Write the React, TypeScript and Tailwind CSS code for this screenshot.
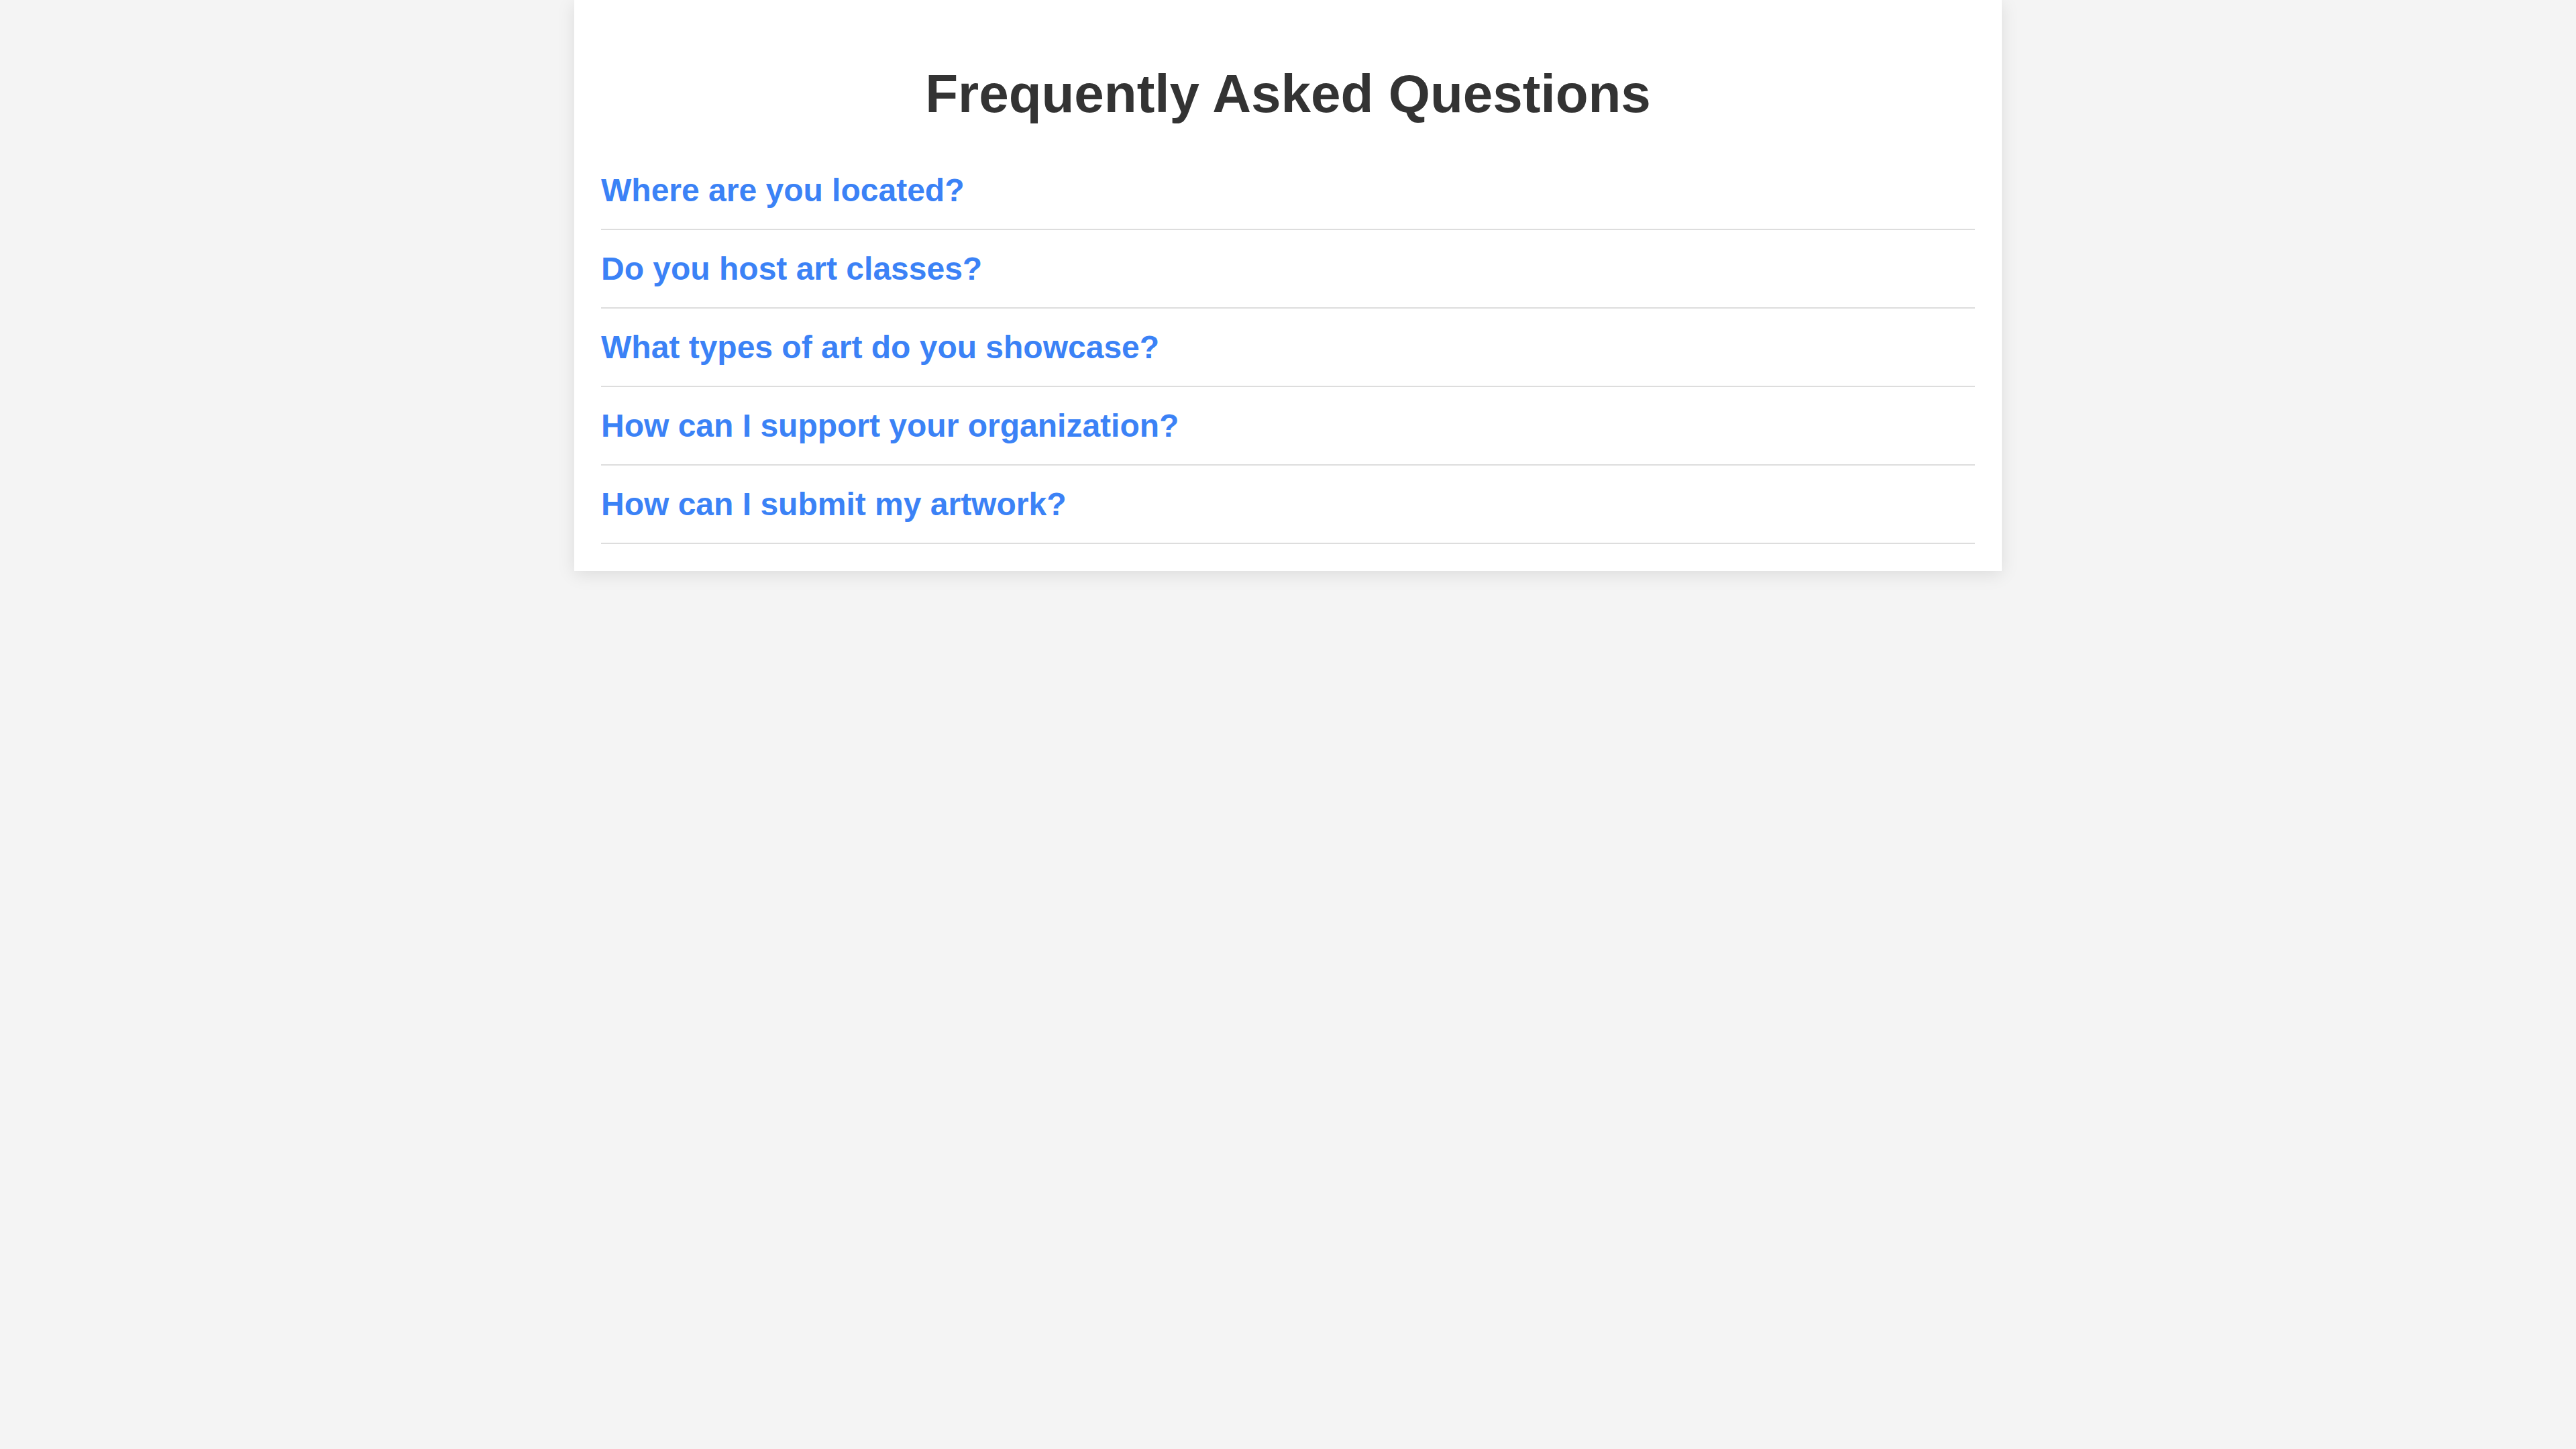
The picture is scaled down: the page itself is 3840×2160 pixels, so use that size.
const questions = [
  "Where are you located?",
  "Do you host art classes?",
  "What types of art do you showcase?",
  "How can I support your organization?",
  "How can I submit my artwork?",
];

const App = () => {
  return (
    <div className="min-h-screen bg-[#f4f4f4] font-['Liberation_Sans',Arial,sans-serif]">
      {/* Card */}
      <div className="mx-auto w-[2128px] bg-white px-[40px] pt-[94px] pb-[40px] shadow-[0_5px_25px_rgba(0,0,0,0.1)]">
        <h1 className="mb-[40px] text-center text-[80px] leading-[92px] font-bold text-[#333333]">
          Frequently Asked Questions
        </h1>
        <ul>
          {questions.map((q) => (
            <li key={q} className="border-b-2 border-[#dddddd] py-[30px]">
              <button className="cursor-pointer text-left text-[48px] leading-[55px] font-bold text-[#3b82f6]">
                {q}
              </button>
            </li>
          ))}
        </ul>
      </div>
    </div>
  );
};

export default App;
